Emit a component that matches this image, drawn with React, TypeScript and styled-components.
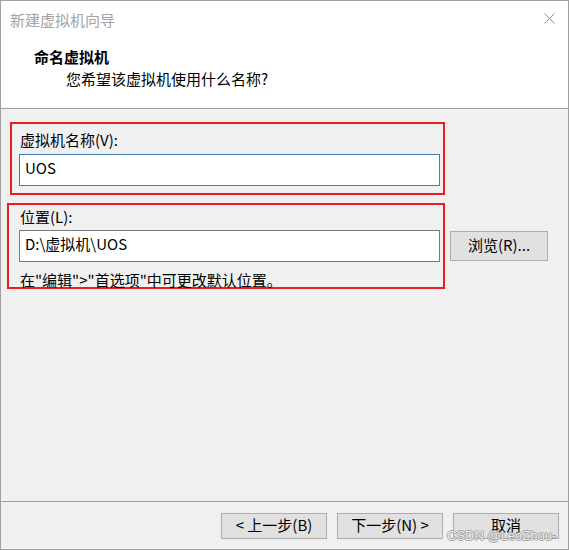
import React from "react";
import styled, { createGlobalStyle } from "styled-components";

const Global = createGlobalStyle`
  html, body { margin: 0; padding: 0; background: #fff; }
  body { font-family: "Noto Sans CJK SC", "Noto Sans", sans-serif; }
  * { box-sizing: border-box; }
`;

const Window = styled.div`
  position: relative;
  width: 569px;
  height: 550px;
  border: 1px solid #a0a0a0;
  display: flex;
  flex-direction: column;
  font-size: 15px;
  color: #000;
`;

const Header = styled.header`
  height: 108px;
  flex: none;
  background: #fff;
  border-bottom: 1px solid #a0a0a0;
  display: flex;
  flex-direction: column;
`;

const TitleBar = styled.div`
  height: 38px;
  display: flex;
  align-items: center;
  justify-content: space-between;
  padding: 0 13px 0 9px;
`;

const Title = styled.span`
  color: #a3a3a3;
  font-size: 15px;
  line-height: 20px;
`;

const CloseButton = styled.span`
  display: flex;
  margin-bottom: 4px;
`;

const Heading = styled.div`
  margin-top: 7px;
  padding-left: 33px;
  font-weight: bold;
  line-height: 22px;
`;

const SubHeading = styled.div`
  padding-left: 65px;
  line-height: 22px;
`;

const Body = styled.main`
  flex: 1;
  background: #f0f0f0;
  padding: 13px 0 0 6px;
  display: flex;
  flex-direction: column;
  gap: 8px;
`;

const Row = styled.div`
  display: flex;
  align-items: flex-start;
`;

const Marked = styled.section<{ $shift: number; $pad: number; $height?: number }>`
  margin-left: ${(p) => p.$shift}px;
  width: ${(p) => 438 - p.$shift}px;
  ${(p) => (p.$height ? `height: ${p.$height}px;` : "")}
  border: 2px solid #ed1c24;
  padding: 0 3px 0 ${(p) => p.$pad}px;
  display: flex;
  flex-direction: column;
`;

const Label = styled.label<{ $top: number }>`
  margin-top: ${(p) => p.$top}px;
  margin-left: 1px;
  line-height: 20px;
`;

const Field = styled.input<{ $focused?: boolean; $gap: number }>`
  margin-top: ${(p) => p.$gap}px;
  width: 421px;
  height: 32px;
  border: 1px solid ${(p) => (p.$focused ? "#3f7db3" : "#7a7a7a")};
  background: #fff;
  padding: 0 5px 5px 5px;
  font: inherit;
  font-size: 15px;
  color: #000;
  outline: none;
`;

const Hint = styled.div`
  margin-top: 11px;
  margin-left: 1px;
  line-height: 14px;
  white-space: nowrap;
`;

const Button = styled.button<{ $w: number; $h: number }>`
  width: ${(p) => p.$w}px;
  height: ${(p) => p.$h}px;
  background: #e1e1e1;
  border: 1px solid #adadad;
  font: inherit;
  font-size: 15px;
  line-height: 20px;
  color: #000;
  padding: 0 0 2px 0;
  display: flex;
  align-items: center;
  justify-content: center;
  white-space: pre;
`;

const BrowseButton = styled(Button)`
  margin-left: 5px;
  margin-top: 28px;
`;

const Footer = styled.footer`
  height: 48px;
  flex: none;
  border-top: 1px solid #a0a0a0;
  background: #f0f0f0;
  display: flex;
  justify-content: flex-end;
  align-items: flex-start;
  gap: 10px;
  padding: 11px 9px 0 0;
`;

const Watermark = styled.span`
  position: absolute;
  left: 446px;
  top: 528px;
  font-family: "Liberation Sans", Arial, sans-serif;
  font-size: 13px;
  line-height: 14px;
  color: #eeeeee;
  text-shadow: 1px 0 0 #9a9a9a, -1px 0 0 #9a9a9a, 0 1px 0 #9a9a9a, 0 -1px 0 #9a9a9a;
  opacity: 0.85;
  pointer-events: none;
`;

export default function App() {
  return (
    <>
      <Global />
      <Window>
        <Header>
          <TitleBar>
            <Title>新建虚拟机向导</Title>
            <CloseButton>
              <svg width="11" height="11" viewBox="0 0 11 11">
                <path d="M0.5 0.5 L10.5 10.5 M10.5 0.5 L0.5 10.5" stroke="#8a8a8a" strokeWidth="1" fill="none" />
              </svg>
            </CloseButton>
          </TitleBar>
          <Heading>命名虚拟机</Heading>
          <SubHeading>您希望该虚拟机使用什么名称?</SubHeading>
        </Header>
        <Body>
          <Marked $shift={3} $pad={7}>
            <Label $top={6}>虚拟机名称(V):</Label>
            <Field $focused $gap={4} readOnly value="UOS" style={{ marginBottom: 7 }} />
          </Marked>
          <Row>
            <Marked $shift={0} $pad={10} $height={86}>
              <Label $top={2}>位置(L):</Label>
              <Field $gap={3} readOnly value="D:\虚拟机\UOS" />
              <Hint>在"编辑"&gt;"首选项"中可更改默认位置。</Hint>
            </Marked>
            <BrowseButton $w={98} $h={30}>浏览(R)...</BrowseButton>
          </Row>
        </Body>
        <Footer>
          <Button $w={106} $h={26}>{"< 上一步(B)"}</Button>
          <Button $w={106} $h={26}>{"下一步(N) >"}</Button>
          <Button $w={106} $h={26}>取消</Button>
        </Footer>
        <Watermark>CSDN @LeoZhou-</Watermark>
      </Window>
    </>
  );
}
